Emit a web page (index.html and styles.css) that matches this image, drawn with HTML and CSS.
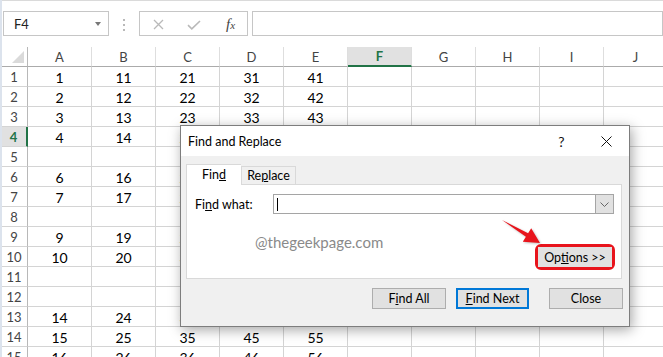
FILE: index.html
```html
<!DOCTYPE html>
<html lang="en">
<head>
    <meta charset="UTF-8">
    <meta name="viewport" content="width=device-width, initial-scale=1.0">
    <title>Find and Replace</title>
    <link rel="stylesheet" href="styles.css">
</head>
<body>

<div class="window">
    <!-- Formula bar -->
    <div class="formula-bar">
        <div class="name-box">
            <span>F4</span>
            <span class="drop-caret"></span>
        </div>
        <div class="grip"><i></i><i></i><i></i></div>
        <div class="fx-buttons">
            <span><svg width="11" height="11" viewBox="0 0 11 11"><path d="M1 1l9 9M10 1l-9 9" stroke="#b9b9b9" stroke-width="1.3" fill="none"/></svg></span>
            <span><svg width="14" height="10" viewBox="0 0 14 10"><path d="M1 5.2l3.8 3.6L13 1" stroke="#b9b9b9" stroke-width="1.6" fill="none"/></svg></span>
            <span class="fx">f<sub>x</sub></span>
        </div>
        <div class="formula-input"></div>
    </div>

    <!-- Sheet -->
    <div class="sheet">
        <div class="corner"></div>
        <div class="col-head">A</div><div class="col-head">B</div><div class="col-head">C</div><div class="col-head">D</div><div class="col-head">E</div>
        <div class="col-head sel">F</div><div class="col-head">G</div><div class="col-head">H</div><div class="col-head">I</div><div class="col-head">J</div>

        <div class="row-head">1</div><div class="cell">1</div><div class="cell">11</div><div class="cell">21</div><div class="cell">31</div><div class="cell">41</div><div class="cell"></div><div class="cell"></div><div class="cell"></div><div class="cell"></div><div class="cell"></div>
        <div class="row-head">2</div><div class="cell">2</div><div class="cell">12</div><div class="cell">22</div><div class="cell">32</div><div class="cell">42</div><div class="cell"></div><div class="cell"></div><div class="cell"></div><div class="cell"></div><div class="cell"></div>
        <div class="row-head">3</div><div class="cell">3</div><div class="cell">13</div><div class="cell">23</div><div class="cell">33</div><div class="cell">43</div><div class="cell"></div><div class="cell"></div><div class="cell"></div><div class="cell"></div><div class="cell"></div>
        <div class="row-head sel">4</div><div class="cell">4</div><div class="cell">14</div><div class="cell">24</div><div class="cell">34</div><div class="cell">44</div><div class="cell active"></div><div class="cell"></div><div class="cell"></div><div class="cell"></div><div class="cell"></div>
        <div class="row-head">5</div><div class="cell"></div><div class="cell"></div><div class="cell"></div><div class="cell"></div><div class="cell"></div><div class="cell"></div><div class="cell"></div><div class="cell"></div><div class="cell"></div><div class="cell"></div>
        <div class="row-head">6</div><div class="cell">6</div><div class="cell">16</div><div class="cell">26</div><div class="cell">36</div><div class="cell">46</div><div class="cell"></div><div class="cell"></div><div class="cell"></div><div class="cell"></div><div class="cell"></div>
        <div class="row-head">7</div><div class="cell">7</div><div class="cell">17</div><div class="cell">27</div><div class="cell">37</div><div class="cell">47</div><div class="cell"></div><div class="cell"></div><div class="cell"></div><div class="cell"></div><div class="cell"></div>
        <div class="row-head">8</div><div class="cell"></div><div class="cell"></div><div class="cell"></div><div class="cell"></div><div class="cell"></div><div class="cell"></div><div class="cell"></div><div class="cell"></div><div class="cell"></div><div class="cell"></div>
        <div class="row-head">9</div><div class="cell">9</div><div class="cell">19</div><div class="cell">29</div><div class="cell">39</div><div class="cell">49</div><div class="cell"></div><div class="cell"></div><div class="cell"></div><div class="cell"></div><div class="cell"></div>
        <div class="row-head">10</div><div class="cell">10</div><div class="cell">20</div><div class="cell">30</div><div class="cell">40</div><div class="cell">50</div><div class="cell"></div><div class="cell"></div><div class="cell"></div><div class="cell"></div><div class="cell"></div>
        <div class="row-head">11</div><div class="cell"></div><div class="cell"></div><div class="cell"></div><div class="cell"></div><div class="cell"></div><div class="cell"></div><div class="cell"></div><div class="cell"></div><div class="cell"></div><div class="cell"></div>
        <div class="row-head">12</div><div class="cell"></div><div class="cell"></div><div class="cell"></div><div class="cell"></div><div class="cell"></div><div class="cell"></div><div class="cell"></div><div class="cell"></div><div class="cell"></div><div class="cell"></div>
        <div class="row-head">13</div><div class="cell">14</div><div class="cell">24</div><div class="cell">34</div><div class="cell">44</div><div class="cell">54</div><div class="cell"></div><div class="cell"></div><div class="cell"></div><div class="cell"></div><div class="cell"></div>
        <div class="row-head">14</div><div class="cell">15</div><div class="cell">25</div><div class="cell">35</div><div class="cell">45</div><div class="cell">55</div><div class="cell"></div><div class="cell"></div><div class="cell"></div><div class="cell"></div><div class="cell"></div>
        <div class="row-head">15</div><div class="cell">16</div><div class="cell">26</div><div class="cell">36</div><div class="cell">46</div><div class="cell">56</div><div class="cell"></div><div class="cell"></div><div class="cell"></div><div class="cell"></div><div class="cell"></div>
    </div>
</div>

<!-- Find and Replace dialog -->
<div class="dialog">
    <div class="dialog-title">
        <span class="title-text">Find and Replace</span>
        <span class="title-btn">?</span>
        <span class="title-btn"><svg width="11" height="11" viewBox="0 0 11 11"><path d="M0.5 0.5l10 10M10.5 0.5l-10 10" stroke="#111" stroke-width="1" fill="none"/></svg></span>
    </div>
    <div class="dialog-body">
        <div class="tabs">
            <span class="tab active">Fin<u>d</u></span>
            <span class="tab">Re<u>p</u>lace</span>
        </div>
        <div class="tab-panel">
            <div class="find-row">
                <label for="findWhat">Fi<u>n</u>d what:</label>
                <div class="combo">
                    <span class="text-caret"></span>
                    <span class="combo-btn"><svg width="9" height="5" viewBox="0 0 9 5"><path d="M0.5 0.5l4 4 4-4" stroke="#666" stroke-width="1" fill="none"/></svg></span>
                </div>
            </div>
            <div class="options-row">
                <span class="watermark">@thegeekpage.com</span>
                <span class="highlight"><button class="btn options">Op<u>t</u>ions &gt;&gt;</button></span>
            </div>
        </div>
        <div class="button-row">
            <button class="btn">F<u>i</u>nd All</button>
            <button class="btn primary"><u>F</u>ind Next</button>
            <button class="btn close">Close</button>
        </div>
    </div>
</div>

<!-- red pointer arrow -->
<svg class="arrow" width="46" height="32" viewBox="0 0 46 32">
    <polygon points="4,6 30.1,19.3 33.2,14.2 42,29 24.8,27.8 27.9,22.7" fill="#e8141c"/>
</svg>

</body>
</html>
```

FILE: styles.css
```css
body {
    margin: 0;
    padding: 0;
    background: #fff;
    font-family: Lato, "Noto Sans", sans-serif;
    color: #000;
    overflow: hidden;
}

.window {
    height: 357px;
    border-left: 2px solid #dce3ed;
    overflow: hidden;
}

/* formula bar */
.formula-bar {
    display: flex;
    align-items: stretch;
    border-top: 1px solid #dadada;
    padding: 10px 0 11px 1px;
}

.name-box {
    width: 106px;
    height: 25px;
    box-sizing: border-box;
    border: 1px solid #c6c6c6;
    display: flex;
    align-items: center;
    justify-content: space-between;
    padding: 0 7px 0 10px;
    font-size: 13px;
    color: #222;
}

.drop-caret {
    width: 0;
    height: 0;
    border-left: 3.5px solid transparent;
    border-right: 3.5px solid transparent;
    border-top: 4px solid #777;
}

.grip {
    width: 2px;
    margin: 8px 14px 0 14px;
    display: flex;
    flex-direction: column;
    gap: 3px;
}

.grip i {
    display: block;
    width: 2px;
    height: 2px;
    background: #b9b9b9;
}

.fx-buttons {
    width: 109px;
    height: 25px;
    box-sizing: border-box;
    border: 1px solid #c6c6c6;
    display: grid;
    grid-template-columns: 36px 36px 35px;
}

.fx-buttons span {
    display: flex;
    align-items: center;
    justify-content: center;
    padding-top: 2px;
}

.fx {
    font-family: "Liberation Serif", serif;
    font-style: italic;
    font-size: 15px;
    color: #444;
    padding-left: 2px;
}

.fx sub {
    font-size: 11px;
    vertical-align: -1px;
}

.formula-input {
    flex: 1;
    height: 25px;
    box-sizing: border-box;
    border: 1px solid #c6c6c6;
    margin-left: 4px;
}

/* sheet grid */
.sheet {
    display: grid;
    grid-template-columns: 26px repeat(10, 64px);
    grid-auto-rows: 20px;
}

.sheet > div {
    box-sizing: border-box;
    display: flex;
    align-items: center;
    justify-content: center;
}

.corner {
    position: relative;
    border-right: 1px solid #b8b8b8;
    border-bottom: 1px solid #ababab;
}

.corner::after {
    content: "";
    position: absolute;
    right: 3px;
    bottom: 3px;
    border-left: 12px solid transparent;
    border-bottom: 12px solid #dadada;
}

.col-head {
    font-size: 13px;
    color: #444;
    border-right: 1px solid #dedede;
    border-bottom: 1px solid #ababab;
}

.col-head.sel {
    background: #e1e1e1;
    color: #217346;
    font-weight: bold;
    border-bottom: 2px solid #217346;
}

.row-head {
    font-size: 13px;
    color: #444;
    border-right: 1px solid #b8b8b8;
    border-bottom: 1px solid #d4d4d4;
    padding-right: 1px;
}

.row-head.sel {
    background: #e1e1e1;
    color: #217346;
    font-weight: bold;
    border-right: 2px solid #217346;
}

.cell {
    font-size: 14px;
    border-right: 1px solid #d4d4d4;
    border-bottom: 1px solid #d4d4d4;
    padding-top: 1px;
}

.cell.active {
    outline: 2px solid #217346;
    outline-offset: -1px;
}

/* dialog */
.dialog {
    position: absolute;
    left: 180px;
    top: 125px;
    width: 450px;
    height: 202px;
    box-sizing: border-box;
    border: 1px solid #7d7d7d;
    background: #f0f0f0;
    box-shadow: 2px 3px 12px rgba(0, 0, 0, 0.35);
    font-size: 12.5px;
}

.dialog-title {
    height: 30px;
    background: #fff;
    display: flex;
    align-items: center;
    padding-left: 7px;
}

.title-text {
    flex: 1;
    font-size: 12.5px;
}

.title-btn {
    width: 45px;
    height: 30px;
    display: flex;
    align-items: center;
    justify-content: center;
    font-size: 14px;
    color: #111;
}

.dialog-body {
    padding: 8px 7px 0 5px;
}

.tabs {
    display: flex;
    align-items: flex-end;
    height: 20px;
    position: relative;
    z-index: 1;
}

.tab {
    width: 55px;
    height: 18px;
    box-sizing: border-box;
    border: 1px solid #d9d9d9;
    border-bottom: none;
    display: flex;
    align-items: center;
    justify-content: center;
    background: #f0f0f0;
}

.tab.active {
    height: 21px;
    margin-bottom: -1px;
    background: #fff;
    border-right: none;
    padding-bottom: 1px;
}

.tab-panel {
    height: 95px;
    box-sizing: border-box;
    border: 1px solid #d9d9d9;
    background: #fff;
    padding: 9px 7px 0 8px;
}

.find-row {
    display: flex;
    align-items: center;
    height: 20px;
}

.find-row label {
    width: 78px;
}

.combo {
    flex: 1;
    height: 20px;
    box-sizing: border-box;
    border: 1px solid #a5a5a5;
    display: flex;
    align-items: center;
    justify-content: space-between;
}

.text-caret {
    width: 1px;
    height: 13px;
    background: #000;
    margin-left: 3px;
}

.combo-btn {
    width: 17px;
    height: 18px;
    background: #e1e1e1;
    border-left: 1px solid #a5a5a5;
    display: flex;
    align-items: center;
    justify-content: center;
}

.options-row {
    display: flex;
    align-items: flex-start;
}

.watermark {
    margin: 19px 0 0 60px;
    font-size: 15px;
    color: #8a8a8a;
}

.highlight {
    margin: 30px -1px 0 auto;
    border: 3px solid #e8141c;
    border-radius: 6px;
    display: flex;
}

.btn {
    width: 74px;
    height: 21px;
    box-sizing: border-box;
    border: 1px solid #adadad;
    background: #e1e1e1;
    font-family: Lato, "Noto Sans", sans-serif;
    font-size: 12.5px;
    color: #000;
    padding: 0;
}

.btn.options {
    height: 20px;
    border-color: #e1e1e1;
}

.btn.primary {
    width: 73px;
    border: 2px solid #0078d7;
    margin-left: 10px;
}

.btn.close {
    margin-left: 20px;
}

.button-row {
    display: flex;
    justify-content: flex-end;
    margin: 9px -1px 0 0;
}

.arrow {
    position: absolute;
    left: 498px;
    top: 214px;
    filter: drop-shadow(1px 1px 1px rgba(0, 0, 0, 0.25));
}
```
